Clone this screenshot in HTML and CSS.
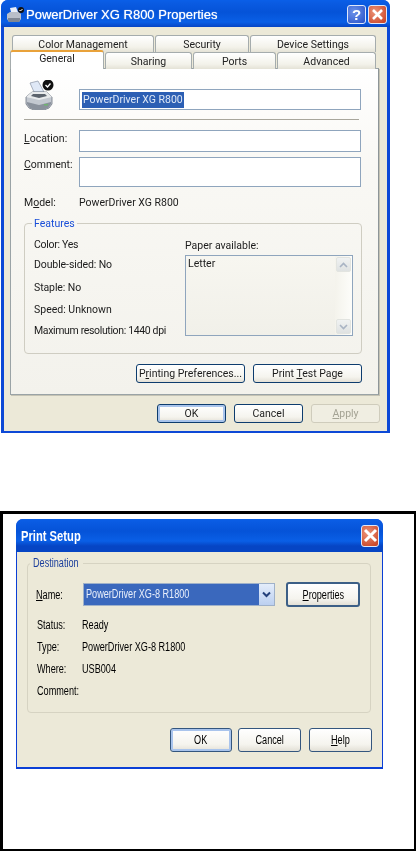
FILE: index.html
```html
<!DOCTYPE html>
<html lang="en">
<head>
<meta charset="utf-8">
<title>Printer dialogs</title>
<link rel="stylesheet" href="styles.css">
</head>
<body>
<section class="props">
  <header class="titlebar">
    <svg class="title-icon" width="19" height="16" viewBox="0 0 19 16">
      <path d="M4 1l6-1 2 5H5z" fill="#e8eef8"/>
      <path d="M1 7l3-2h9l2 2v5l-2 3H3l-2-3z" fill="#b9bfc9"/>
      <path d="M2 11h12v2l-1 2H3l-1-2z" fill="#7f8794"/>
      <circle cx="15" cy="3" r="3" fill="#111"/>
      <path d="M13.5 3l1 1 2-2" stroke="#fff" fill="none"/>
    </svg>
    <h1 class="title-text">PowerDriver XG R800 Properties</h1>
    <div class="title-buttons">
      <span class="cap cap-help">?</span>
      <span class="cap cap-close"><svg width="13" height="13" viewBox="0 0 13 13"><path d="M2 2l9 9M11 2l-9 9" stroke="#fff" stroke-width="2.6"/></svg></span>
    </div>
  </header>
  <div class="client">
    <div class="tabrow tabrow-back">
      <div class="tab t-color">Color Management</div>
      <div class="tab t-sec">Security</div>
      <div class="tab t-dev">Device Settings</div>
    </div>
    <div class="tabrow tabrow-front">
      <div class="tab tab-active">General</div>
      <div class="tab t-share">Sharing</div>
      <div class="tab t-ports">Ports</div>
      <div class="tab t-adv">Advanced</div>
    </div>
    <div class="panel">
      <div class="head-row">
        <svg class="printer" width="30" height="30" viewBox="0 0 30 30">
          <path d="M5 3l8-2 6 11H9z" fill="#dfe8f6" stroke="#8a94a5" stroke-width=".7"/>
          <path d="M1 17l6-5h15l5 5v7l-3 4-5 2H9l-5-2-3-4z" fill="#c3c8d0" stroke="#6c7480" stroke-width=".8"/>
          <path d="M7 12h15l5 5-13 3-13-3z" fill="#e8eaec"/>
          <path d="M2 22l12 3 12-3v2l-3 4-5 2H10l-5-2-3-4z" fill="#8a919c"/>
          <path d="M8 14h12l2 2-8 2-8-2z" fill="#5c636d"/>
          <rect x="19" y="24" width="4" height="1.500" fill="#6fb36f"/>
          <circle cx="23" cy="5" r="5.500" fill="#111"/>
          <path d="M20.500 5l2 2 3-3.500" stroke="#fff" stroke-width="1.300" fill="none"/>
        </svg>
        <div class="field field-name"><span class="selected">PowerDriver XG R800</span></div>
      </div>
      <hr class="rule">
      <div class="form-row row-location">
        <label class="form-label"><u>L</u>ocation:</label>
        <div class="field field-location"></div>
      </div>
      <div class="form-row row-comment">
        <label class="form-label"><u>C</u>omment:</label>
        <div class="field field-comment"></div>
      </div>
      <div class="form-row row-model">
        <span class="form-label">M<u>o</u>del:</span>
        <span>PowerDriver XG R800</span>
      </div>
      <fieldset class="features">
        <legend class="legend">Features</legend>
        <div class="feature-cols">
          <ul class="feature-list">
            <li>Color: Yes</li>
            <li>Double-sided: No</li>
            <li>Staple: No</li>
            <li>Speed: Unknown</li>
            <li>Maximum resolution: 1440 dpi</li>
          </ul>
          <div class="paper">
            <div class="paper-label">Paper available:</div>
            <div class="listbox">
              <div class="list-item">Letter</div>
              <div class="scrollbar">
                <span class="sb-btn"><svg width="9" height="6" viewBox="0 0 9 6"><path d="M1 5l3.500-3.500L8 5" stroke="#a9b4c4" stroke-width="1.600" fill="none"/></svg></span>
                <span class="sb-btn"><svg width="9" height="6" viewBox="0 0 9 6"><path d="M1 1l3.500 3.500L8 1" stroke="#a9b4c4" stroke-width="1.600" fill="none"/></svg></span>
              </div>
            </div>
          </div>
        </div>
      </fieldset>
      <div class="panel-actions">
        <button class="btn btn-wide">P<u>r</u>inting Preferences...</button>
        <button class="btn btn-wide">Print <u>T</u>est Page</button>
      </div>
    </div>
    <div class="actions">
      <button class="btn btn-std btn-default">OK</button>
      <button class="btn btn-std">Cancel</button>
      <button class="btn btn-std btn-disabled"><u>A</u>pply</button>
    </div>
  </div>
</section>

<section class="frame">
  <div class="setup">
    <header class="titlebar setup-title">
      <h2 class="setup-text">Print Setup</h2>
      <span class="cap cap-close cap-big"><svg width="15" height="15" viewBox="0 0 15 15"><path d="M2 2l11 11M13 2L2 13" stroke="#fff" stroke-width="3"/></svg></span>
    </header>
    <div class="setup-client">
      <fieldset class="destination">
        <legend class="legend-dest"><span class="cond">Destination</span></legend>
        <div class="name-row">
          <span class="s-label"><span class="cond"><u>N</u>ame:</span></span>
          <div class="combo">
            <span class="combo-value"><span class="cond">PowerDriver XG-8 R1800</span></span>
            <span class="combo-btn"><svg width="9" height="7" viewBox="0 0 9 7"><path d="M1 1.500l3.500 3.500L8 1.500" stroke="#24407a" stroke-width="2" fill="none"/></svg></span>
          </div>
          <button class="btn btn-props"><span class="cond-c"><u>P</u>roperties</span></button>
        </div>
        <dl class="info">
          <div class="info-row"><dt><span class="cond">Status:</span></dt><dd><span class="cond">Ready</span></dd></div>
          <div class="info-row"><dt><span class="cond">Type:</span></dt><dd><span class="cond">PowerDriver XG-8 R1800</span></dd></div>
          <div class="info-row"><dt><span class="cond">Where:</span></dt><dd><span class="cond">USB004</span></dd></div>
          <div class="info-row"><dt><span class="cond">Comment:</span></dt><dd></dd></div>
        </dl>
      </fieldset>
      <div class="setup-actions">
        <button class="btn btn-s btn-default b-ok"><span class="cond-c">OK</span></button>
        <button class="btn btn-s b-cancel"><span class="cond-c">Cancel</span></button>
        <button class="btn btn-s b-help"><span class="cond-c"><u>H</u>elp</span></button>
      </div>
    </div>
  </div>
</section>
</body>
</html>
```
FILE: styles.css
```css
* { box-sizing: border-box; }
html, body { margin: 0; padding: 0; background: #fff; }
body {
  width: 416px;
  height: 851px;
  overflow: hidden;
  font-family: Roboto, "Liberation Sans", Arial, sans-serif;
  font-size: 10.5px;
  color: #1c1c1c;
}
h1, h2, ul, dl, dd { margin: 0; padding: 0; }
ul { list-style: none; }
u { text-underline-offset: 1px; }

/* Title bars */
.titlebar {
  height: 27px;
  display: flex;
  align-items: center;
  padding-top: 2px;
  background: linear-gradient(#0a5fe8 0, #0a5be2 3px, #0553d8 12px, #0a5fe6 22px, #0645c4 27px);
  border-radius: 7px 7px 0 0;
}
.title-icon { margin-left: 5px; flex: none; }
.title-text {
  margin-left: 1px;
  flex: 1;
  font: 400 13px "Liberation Sans", Arial, sans-serif;
  color: #fff;
  text-shadow: 0 0 1px #cfe0ff;
}
.title-buttons { display: flex; gap: 2px; margin-right: 3px; }
.cap {
  width: 19px;
  height: 19px;
  border: 1px solid #dfe8fb;
  border-radius: 3px;
  display: flex;
  align-items: center;
  justify-content: center;
  color: #fff;
  font: 700 15px "Liberation Sans", Arial, sans-serif;
}
.cap-help { background: radial-gradient(circle at 35% 35%, #6d93ea, #2650c8); }
.cap-close { background: radial-gradient(circle at 35% 35%, #ec9478, #c63c1e); }

/* Properties window */
.props {
  width: 389px;
  height: 433px;
  margin-left: 1px;
  background: #0d49d6;
  display: flex;
  flex-direction: column;
  border-radius: 7px 7px 0 0;
  filter: blur(.3px);
}
.client {
  flex: 1;
  margin: 0 3px 2px;
  padding: 8px 7px 0 6px;
  background: #ece9d8;
  display: flex;
  flex-direction: column;
}
.tabrow { display: flex; height: 17px; position: relative; }
.tabrow-back { padding-left: 2px; gap: 1px; }
.tabrow-front { gap: 1px; z-index: 2; }
.tab {
  height: 17px;
  display: flex;
  align-items: center;
  justify-content: center;
  background: linear-gradient(#fff, #f3f2ea 70%, #e4e2d6);
  border: 1px solid #a5acad;
  border-bottom: 0;
  border-radius: 3px 3px 0 0;
  color: #222;
}
.t-color { width: 142px; }
.t-sec { width: 94px; }
.t-dev { width: 126px; }
.tab-active {
  width: 94px;
  height: 19px;
  margin-top: -2px;
  padding-bottom: 4px;
  background: #fff;
  border-top: 2px solid #e9a23a;
  position: relative;
}
.t-share { width: 87px; }
.t-ports { width: 83px; }
.t-adv { width: 99px; }
.panel {
  width: 369px;
  height: 327px;
  margin-top: -1px;
  padding: 12px 0 0 13px;
  background: linear-gradient(#fff, #f9f8f4 30%, #f3f2ec);
  border: 1px solid #9aa3a6;
  border-right-color: #8d9598;
  box-shadow: 1px 1px 0 #c5c3b4;
}

.head-row { display: flex; align-items: flex-end; height: 29px; }
.printer { flex: none; width: 30px; margin-left: 1px; }
.field {
  background: #fff;
  border: 1px solid #8fa5bd;
  width: 282px;
  flex: none;
}
.field-name {
  margin-left: 24px;
  height: 21px;
  padding: 2px 0 0 2px;
  line-height: 15px;
}
.selected { background: #2c5fb4; color: #dfe8f6; padding: 1px; display: inline-block; line-height: 14px; }
.rule {
  margin: 9px 0 10px;
  width: 335px;
  height: 1px;
  border: 0;
  background: #a8a69c;
}
.form-row { display: flex; }
.form-label { width: 55px; flex: none; }
.row-location { height: 22px; }
.row-location .form-label { padding-top: 2px; }
.row-comment .form-label { padding-top: 1px; }
.field-location { height: 22px; }
.row-comment { margin-top: 5px; height: 30px; }
.field-comment { height: 30px; }
.row-model { margin-top: 9px; line-height: 13px; align-items: center; }

.features {
  margin: 8px 0 0;
  padding: 0 0 0 9px;
  width: 338px;
  height: 137px;
  border: 1px solid #cfcdc2;
  border-radius: 4px;
  min-width: 0;
}
.legend { margin-left: -2px; padding: 0 2px; color: #1a4fd8; line-height: 13px; }
.feature-cols { display: flex; padding-top: 8px; }
.feature-list { width: 151px; flex: none; line-height: 14px; letter-spacing: -.1px; }
.feature-list li { margin-bottom: 8px; }
.feature-list li:first-child { margin-bottom: 6px; letter-spacing: -.3px; }
.feature-list li:nth-child(2) { margin-bottom: 9px; }
.feature-list li:nth-child(4) { margin-bottom: 7px; letter-spacing: 0; }
.feature-list li:last-child { letter-spacing: -.35px; }
.paper-label { line-height: 13px; margin-top: 1px; }
.listbox {
  width: 168px;
  height: 81px;
  margin-top: 3px;
  border: 1px solid #8fa5bd;
  display: flex;
  justify-content: space-between;
  background: linear-gradient(#f7f6f0, #f1f0e9);
}
.list-item { padding: 1px 2px; line-height: 13px; }
.scrollbar {
  width: 17px;
  display: flex;
  flex-direction: column;
  justify-content: space-between;
  padding: 1px;
  background: linear-gradient(90deg, #f4f3ec, #fdfdfa);
}
.sb-btn {
  height: 15px;
  display: flex;
  align-items: center;
  justify-content: center;
  background: linear-gradient(#f0f2f2, #dfe2e2);
  border: 1px solid #e2e4e0;
  border-radius: 2px;
}

.panel-actions {
  display: flex;
  gap: 8px;
  margin: 10px 0 0 112px;
}

/* Buttons */
.btn {
  padding: 0;
  font: 10.5px Roboto, "Liberation Sans", Arial, sans-serif;
  color: #1c1c1c;
  background: linear-gradient(#fff, #f5f4ee 70%, #e3e0d6);
  border: 1px solid #0d3c6e;
  border-radius: 3px;
}
.btn-wide { width: 109px; height: 19px; }
.actions {
  display: flex;
  gap: 8px;
  margin: 9px 0 0 147px;
}
.btn-std { width: 69px; height: 19px; }
.btn-default { box-shadow: inset 0 0 0 2px #a9c4ec; }
.btn-disabled { color: #a4a394; border-color: #cfccbc; background: #f0eee2; }

/* Print setup */
.frame {
  width: 416px;
  height: 340px;
  margin-top: 78px;
  padding: 5px 0 0 13px;
  border: 3px solid #000;
  border-right-width: 2px;
  border-bottom-width: 2px;
  font-family: "Liberation Sans", Arial, sans-serif;
  font-size: 12px;
  color: #000;
}
.cond { display: inline-block; transform: scaleX(.76); transform-origin: left center; white-space: nowrap; }
.cond-c { display: inline-block; transform: scaleX(.76); transform-origin: center; white-space: nowrap; }
.setup {
  width: 367px;
  height: 250px;
  background: #0b3fd6;
  display: flex;
  flex-direction: column;
  border-radius: 7px 7px 0 0;
  filter: blur(.3px);
}
.setup-title {
  height: 33px;
  padding: 0 4px 0 5px;
  flex: none;
  justify-content: space-between;
}
.setup-text {
  font: 700 14px "Liberation Sans", Arial, sans-serif;
  color: #fff;
  transform: scaleX(.8);
  transform-origin: left center;
}
.cap-big { width: 18px; height: 22px; }
.setup-client {
  flex: 1;
  margin: 0 1px 2px;
  padding: 0 0 0 10px;
  background: #ece9d8;
}
.destination {
  margin: 5px 0 0;
  padding: 0 0 0 8px;
  width: 344px;
  height: 156px;
  min-width: 0;
  border: 1px solid #d6d3c2;
  border-radius: 4px;
}
.legend-dest { margin-left: -6px; padding: 0 3px; color: #1c3f9c; line-height: 13px; width: 53px; }
.name-row { display: flex; align-items: center; height: 25px; margin-top: 12px; }
.s-label { width: 47px; flex: none; }
.combo {
  width: 192px;
  height: 23px;
  flex: none;
  display: flex;
  background: #3a68bd;
  border: 1px solid #9fb1c9;
}
.combo-value { flex: 1; line-height: 21px; padding-left: 2px; color: #e8eefa; overflow: hidden; }
.combo-btn {
  width: 15px;
  display: flex;
  align-items: center;
  justify-content: center;
  background: linear-gradient(#e4edfb, #bcd0f0);
}
.btn-props {
  width: 74px;
  height: 25px;
  margin-left: 11px;
  border-width: 2px;
  border-color: #3c5f86;
}
.info { margin-top: 7px; padding-left: 1px; }
.info-row { display: flex; height: 22px; align-items: center; }
.info-row dt { width: 45px; flex: none; }
.setup-actions { display: flex; margin: 15px 0 0 143px; }
.btn-s { height: 24px; font: 12px "Liberation Sans", Arial, sans-serif; color: #000; border-color: #34567e; border-width: 1.500px; }
.b-ok { width: 62px; }
.b-cancel { width: 63px; margin-left: 6px; }
.b-help { width: 63px; margin-left: 8px; }
.btn-props { font: 12px "Liberation Sans", Arial, sans-serif; color: #000; }
```
